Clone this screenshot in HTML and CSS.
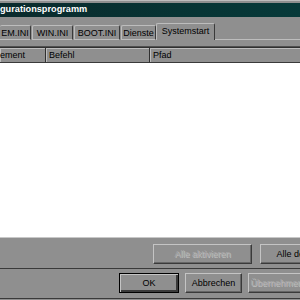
FILE: index.html
```html
<!DOCTYPE html>
<html lang="de">
<head>
    <meta charset="UTF-8">
    <title>Systemkonfigurationsprogramm</title>
    <link rel="stylesheet" href="styles.css">
</head>
<body>

<div class="window">
    <div class="titlebar">gurationsprogramm</div>

    <div class="tabs">
        <div class="tab tab-system">EM.INI</div>
        <div class="tab tab-win">WIN.INI</div>
        <div class="tab tab-boot">BOOT.INI</div>
        <div class="tab tab-dienste">Dienste</div>
        <div class="tab active">Systemstart</div>
        <div class="tab-rest"></div>
    </div>

    <div class="panel">
        <div class="list">
            <div class="list-head">
                <div class="col col-elem">ement</div>
                <div class="col col-cmd">Befehl</div>
                <div class="col col-path">Pfad</div>
            </div>
            <div class="list-body"></div>
        </div>
        <div class="panel-buttons">
            <button class="btn btn-wide" disabled>Alle aktivieren</button>
            <button class="btn btn-wide">Alle deaktivieren</button>
        </div>
    </div>

    <div class="dialog-buttons">
        <button class="btn btn-default">OK</button>
        <button class="btn">Abbrechen</button>
        <button class="btn" disabled>Übernehmen</button>
    </div>
</div>

</body>
</html>
```

FILE: styles.css
```css
body {
    margin: 0;
    width: 300px;
    height: 300px;
    overflow: hidden;
    background-color: #8f8f8f;
    font-family: "Liberation Sans", Arial, sans-serif;
    font-size: 9px;
    color: #000;
}
.window {
    width: 300px;
    height: 299px;
    padding-top: 2px;
    border-top: 1px solid #bdbdbd;
    border-bottom: 1px solid #3a3a3a;
    box-sizing: border-box;
    background-color: #8f8f8f;
    overflow: hidden;
}
.titlebar {
    height: 14px;
    line-height: 13px;
    background: linear-gradient(to right, #0a2a2c, #073434 60%, #073a3a);
    color: #fff;
    font-weight: bold;
    font-size: 9.2px;
    white-space: nowrap;
}
.tabs {
    display: flex;
    align-items: flex-end;
    height: 23px;
}
.tab {
    height: 15px;
    line-height: 14px;
    border-top: 1px solid #bdbdbd;
    border-left: 1px solid #bdbdbd;
    border-right: 1px solid #3a3a3a;
    border-bottom: 1px solid #bdbdbd;
    border-radius: 2px 2px 0 0;
    margin-right: 1px;
    text-align: center;
    white-space: nowrap;
    box-sizing: border-box;
}
.tab-system {
    width: 31px;
    border-left: none;
}
.tab-win { width: 41px; }
.tab-boot { width: 46px; }
.tab-dienste { width: 35px; margin-right: 0; }
.tab.active {
    width: 59px;
    height: 17px;
    line-height: 15px;
    border-bottom: none;
    margin-right: 0;
}
.tab-rest {
    flex: 1;
    border-bottom: 1px solid #bdbdbd;
}
.panel {
    height: 229px;
    border-bottom: 1px solid #3a3a3a;
    box-sizing: border-box;
    padding-top: 6px;
}
.list {
    border-top: 1px solid #505050;
    border-bottom: 1px solid #c8c8c8;
}
.list-head {
    display: flex;
    height: 15px;
    border-top: 1px solid #303030;
    background-color: #8f8f8f;
}
.col {
    line-height: 14px;
    padding-left: 3px;
    border-right: 1px solid #303030;
    border-bottom: 1px solid #3a3a3a;
    box-shadow: inset 1px 1px 0 #bdbdbd;
    box-sizing: border-box;
    white-space: nowrap;
}
.col-elem { width: 46px; padding-left: 0; }
.col-cmd { width: 104px; }
.col-path { flex: 1; border-right: none; }
.list-body {
    height: 174px;
    background-color: #fff;
}
.panel-buttons {
    display: flex;
    gap: 8px;
    padding: 6px 0 0 153px;
}
.btn {
    height: 20px;
    padding: 0;
    font-family: "Liberation Sans", Arial, sans-serif;
    font-size: 9px;
    color: #000;
    background-color: #8f8f8f;
    border: 1px solid #3a3a3a;
    border-top-color: #c4c4c4;
    border-left-color: #c4c4c4;
    box-shadow: inset -1px -1px 0 #666;
    box-sizing: border-box;
    white-space: nowrap;
    flex-shrink: 0;
}
.btn-wide { width: 99px; }
.btn[disabled] {
    color: #a8a8a8;
    text-shadow: 1px 1px 0 #c0c0c0;
}
.dialog-buttons {
    display: flex;
    gap: 6px;
    padding: 4px 0 0 119px;
}
.dialog-buttons .btn { width: 57px; }
.dialog-buttons .btn-default {
    width: 60px;
    border: 1px solid #000;
    box-shadow: inset 1px 1px 0 #c4c4c4, inset -2px -2px 0 #3a3a3a;
}
```
